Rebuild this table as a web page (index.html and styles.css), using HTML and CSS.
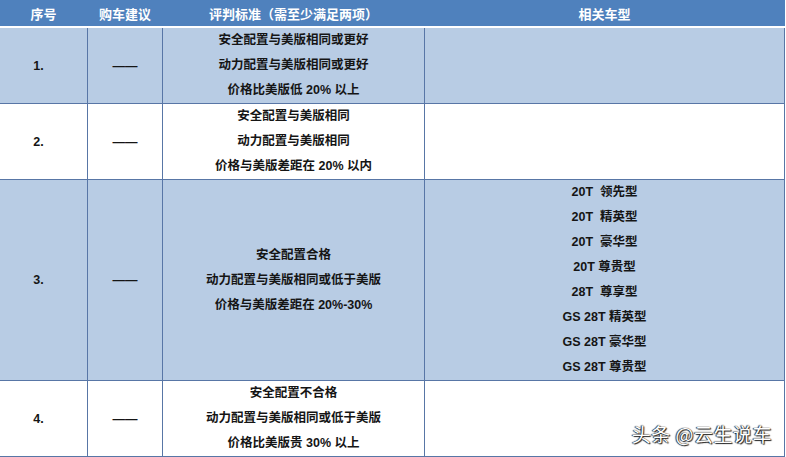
FILE: index.html
```html
<!DOCTYPE html>
<html lang="zh">
<head>
<meta charset="utf-8">
<title>评判标准</title>
<link rel="stylesheet" href="styles.css">
</head>
<body>
<div class="sheet">
  <div class="row head">
    <div class="cell">序号</div>
    <div class="cell">购车建议</div>
    <div class="cell">评判标准（需至少满足两项）</div>
    <div class="cell">相关车型</div>
  </div>
  <div class="row blue">
    <div class="cell num">1.</div>
    <div class="cell">——</div>
    <div class="cell lines"><span>安全配置与美版相同或更好</span><span>动力配置与美版相同或更好</span><span>价格比美版低 20% 以上</span></div>
    <div class="cell"></div>
  </div>
  <div class="row white">
    <div class="cell num">2.</div>
    <div class="cell">——</div>
    <div class="cell lines"><span>安全配置与美版相同</span><span>动力配置与美版相同</span><span>价格与美版差距在 20% 以内</span></div>
    <div class="cell"></div>
  </div>
  <div class="row blue">
    <div class="cell num">3.</div>
    <div class="cell">——</div>
    <div class="cell lines"><span>安全配置合格</span><span>动力配置与美版相同或低于美版</span><span>价格与美版差距在 20%-30%</span></div>
    <div class="cell lines models"><span>20T  领先型</span><span>20T  精英型</span><span>20T  豪华型</span><span>20T 尊贵型</span><span>28T  尊享型</span><span>GS 28T 精英型</span><span>GS 28T 豪华型</span><span>GS 28T 尊贵型</span></div>
  </div>
  <div class="row white">
    <div class="cell num">4.</div>
    <div class="cell">——</div>
    <div class="cell lines"><span>安全配置不合格</span><span>动力配置与美版相同或低于美版</span><span>价格比美版贵 30% 以上</span></div>
    <div class="cell"></div>
  </div>
  <div class="watermark">头条 @云生说车</div>
</div>
</body>
</html>
```
FILE: styles.css
```css
html, body {
  margin: 0;
  padding: 0;
  background: #ffffff;
}
.sheet {
  position: relative;
  width: 785px;
  font-family: "Liberation Sans", "Noto Sans CJK SC", sans-serif;
  font-weight: bold;
  font-size: 12.5px;
  color: #151515;
}
.row {
  display: grid;
  grid-template-columns: 88px 75px 262px 360px;
  border-bottom: 1px solid #5876a6;
  min-height: 75px;
}
.row .cell {
  display: flex;
  align-items: center;
  justify-content: center;
  border-right: 1px solid #5876a6;
}
.head {
  min-height: 26px;
  height: 26px;
  background: #4f81bd;
  color: #ffffff;
  border-bottom: 2px solid #ffffff;
}
.head .cell {
  border-right: 1px solid #4f81bd;
  font-size: 13px;
}
.blue {
  background: #b8cce4;
}
.white {
  background: #ffffff;
}
.num {
  padding-right: 10px;
}
.lines {
  flex-direction: column;
}
.lines span {
  display: block;
  line-height: 25px;
  height: 25px;
  text-align: center;
}
.models span {
  white-space: pre;
}
.watermark {
  position: absolute;
  right: 13px;
  bottom: 10px;
  font-family: "Noto Sans CJK SC", sans-serif;
  font-weight: normal;
  font-size: 19px;
  color: #ffffff;
  text-shadow: 0 0 1px #111, 1px 1px 1px #222, -1px 0 1px #333;
  letter-spacing: 0.5px;
}
```
